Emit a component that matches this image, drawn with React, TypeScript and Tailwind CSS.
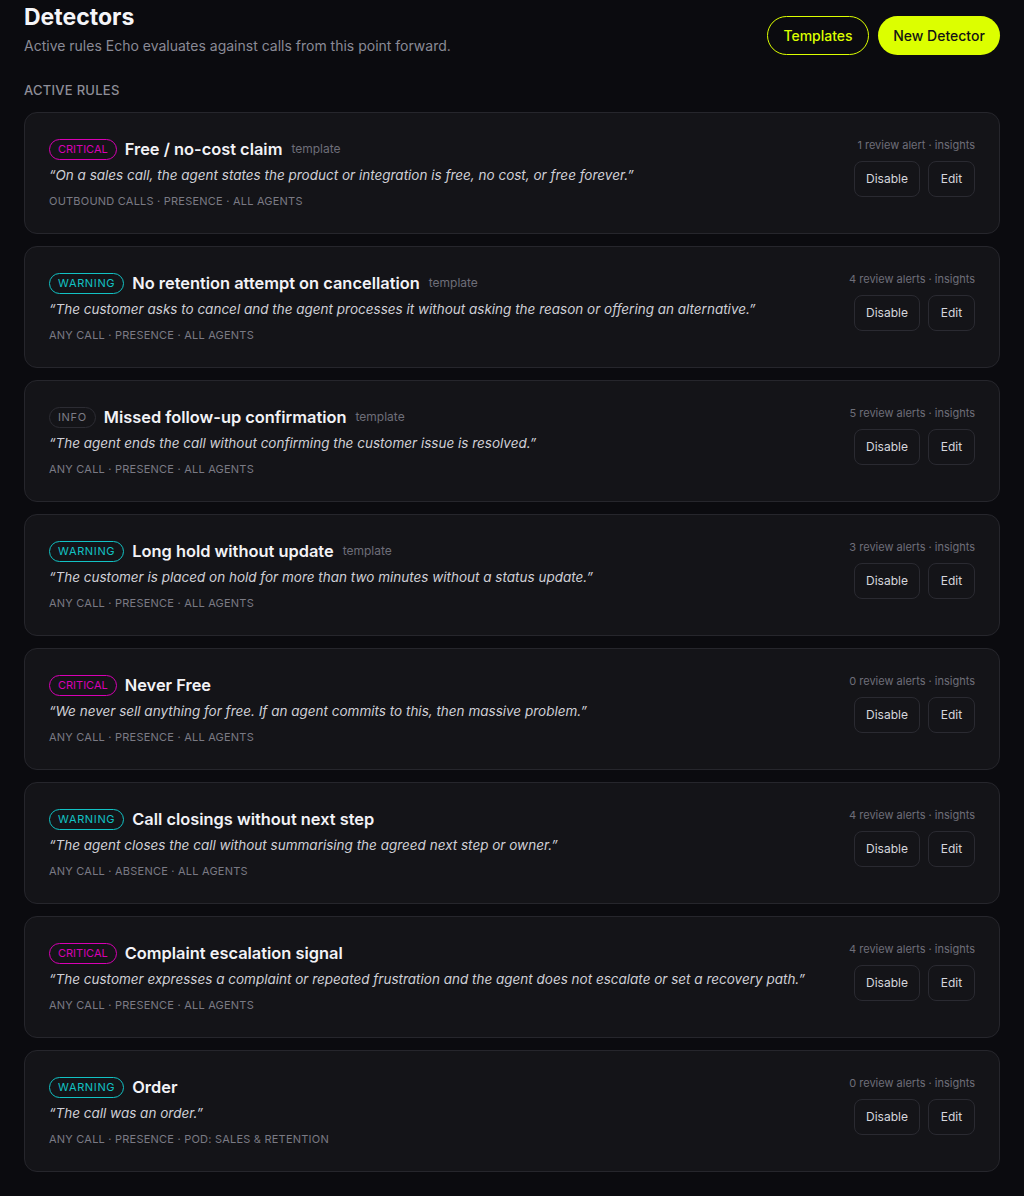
import React from "react";

type Level = "critical" | "warning" | "info";

interface Rule {
  level: Level;
  name: string;
  template?: boolean;
  prompt: string;
  scope: string;
  alerts: number;
}

const rules: Rule[] = [
  {
    level: "critical",
    name: "Free / no-cost claim",
    template: true,
    prompt: "On a sales call, the agent states the product or integration is free, no cost, or free forever.",
    scope: "Outbound calls · Presence · All agents",
    alerts: 1,
  },
  {
    level: "warning",
    name: "No retention attempt on cancellation",
    template: true,
    prompt: "The customer asks to cancel and the agent processes it without asking the reason or offering an alternative.",
    scope: "Any call · Presence · All agents",
    alerts: 4,
  },
  {
    level: "info",
    name: "Missed follow-up confirmation",
    template: true,
    prompt: "The agent ends the call without confirming the customer issue is resolved.",
    scope: "Any call · Presence · All agents",
    alerts: 5,
  },
  {
    level: "warning",
    name: "Long hold without update",
    template: true,
    prompt: "The customer is placed on hold for more than two minutes without a status update.",
    scope: "Any call · Presence · All agents",
    alerts: 3,
  },
  {
    level: "critical",
    name: "Never Free",
    prompt: "We never sell anything for free. If an agent commits to this, then massive problem.",
    scope: "Any call · Presence · All agents",
    alerts: 0,
  },
  {
    level: "warning",
    name: "Call closings without next step",
    prompt: "The agent closes the call without summarising the agreed next step or owner.",
    scope: "Any call · Absence · All agents",
    alerts: 4,
  },
  {
    level: "critical",
    name: "Complaint escalation signal",
    prompt: "The customer expresses a complaint or repeated frustration and the agent does not escalate or set a recovery path.",
    scope: "Any call · Presence · All agents",
    alerts: 4,
  },
  {
    level: "warning",
    name: "Order",
    prompt: "The call was an order.",
    scope: "Any call · Presence · Pod: Sales & Retention",
    alerts: 0,
  },
];

function LevelBadge({ level }: { level: Level }) {
  if (level === "critical") {
    return (
      <span className="inline-flex h-[21px] items-center rounded-full border border-[#d800b4] px-[8px] text-[11px] uppercase text-[#d800b4]">
        Critical
      </span>
    );
  }
  if (level === "warning") {
    return (
      <span className="inline-flex h-[21px] items-center rounded-full border border-[#12c2c4] px-[8px] text-[11px] uppercase tracking-[0.06em] text-[#12c2c4]">
        Warning
      </span>
    );
  }
  return (
    <span className="inline-flex h-[21px] items-center rounded-full border border-[#2c2c33] px-[8px] text-[11px] uppercase tracking-[0.06em] text-[#7c7c86]">
      Info
    </span>
  );
}

function RuleCard({ rule }: { rule: Rule }) {
  return (
    <div className="flex justify-between rounded-[13px] border border-[#26262c] bg-[#141418] px-6 pb-6 pt-6">
      <div className="min-w-0">
        <div className="flex h-6 items-center gap-2">
          <LevelBadge level={rule.level} />
          <span className="text-[16.4px] font-semibold text-[#f2f2f6]">{rule.name}</span>
          {rule.template && <span className="pl-[1px] text-[12px] text-[#6e6e78]">template</span>}
        </div>
        <p className="mt-1 text-[13.5px] italic leading-5 text-[#cfcfd6]">“{rule.prompt}”</p>
        <p className="mt-2 text-[11px] uppercase leading-4 tracking-[0.02em] text-[#7a7a84]">{rule.scope}</p>
      </div>
      <div className="flex shrink-0 flex-col items-end">
        <span className="text-[11px] leading-4 text-[#6e6e78]">
          {rule.alerts} review {rule.alerts === 1 ? "alert" : "alerts"} · insights
        </span>
        <div className="mt-2 flex gap-2">
          <button className="h-9 w-[66px] rounded-[8px] border border-[#2a2a31] text-[12px] text-[#d6d6dc]">
            Disable
          </button>
          <button className="h-9 w-[47px] rounded-[8px] border border-[#2a2a31] text-[12px] text-[#d6d6dc]">
            Edit
          </button>
        </div>
      </div>
    </div>
  );
}

export default function App() {
  return (
    <div
      className="min-h-screen bg-[#0b0b0f] px-6 pb-[25px] pt-[3px]"
      style={{ fontFamily: "Inter, 'Noto Sans', sans-serif" }}
    >
      <header className="flex items-start justify-between">
        <div>
          <h1 className="text-[23px] font-bold leading-7 text-[#f5f5f8]">Detectors</h1>
          <p className="mt-[5px] text-[14px] leading-5 text-[#8a8a96]">
            Active rules Echo evaluates against calls from this point forward.
          </p>
        </div>
        <div className="mt-[13px] flex gap-[9px]">
          <button className="h-[39px] w-[102px] rounded-full border border-[#dcff00] text-[14px] font-medium text-[#dcff00]">
            Templates
          </button>
          <button className="h-[39px] w-[122px] rounded-full bg-[#dcff00] text-[14px] font-medium text-[#141414]">
            New Detector
          </button>
        </div>
      </header>

      <h2 className="mt-[26px] text-[13px] font-medium uppercase leading-4 tracking-[0.02em] text-[#8e8e98]">
        Active rules
      </h2>

      <div className="mt-[14px] flex flex-col gap-[12px]">
        {rules.map((r) => (
          <RuleCard key={r.name} rule={r} />
        ))}
      </div>
    </div>
  );
}
